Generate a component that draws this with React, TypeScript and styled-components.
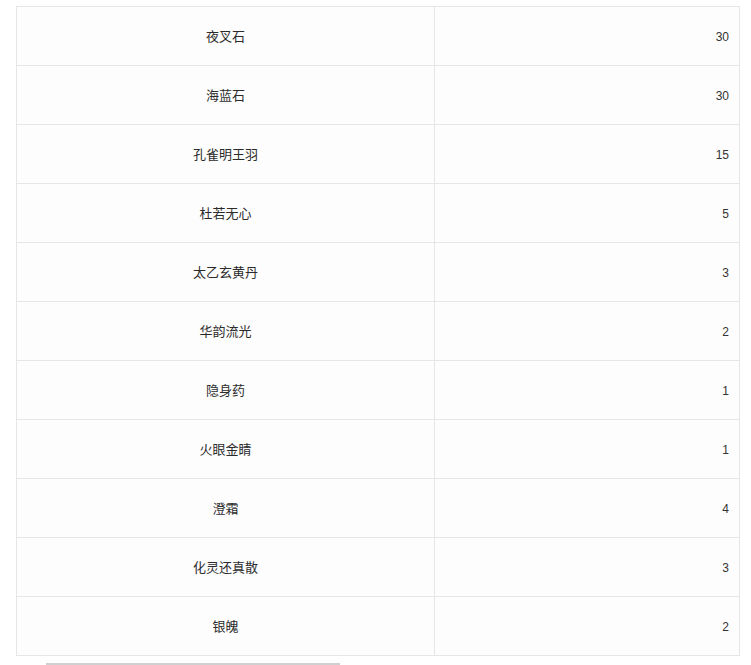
import React from 'react';
import styled, { createGlobalStyle } from 'styled-components';

const GlobalStyle = createGlobalStyle`
  html, body {
    margin: 0;
    padding: 0;
    background: #ffffff;
  }
`;

const Page = styled.div`
  padding: 6px 0 0 16px;
  font-family: 'Liberation Sans', 'Noto Sans CJK SC', sans-serif;
  font-size: 13px;
  color: #2b2b2b;
`;

const Table = styled.table`
  width: 724px;
  border-collapse: collapse;
  border: 1px solid #e6e6e6;
  background: #fdfdfd;
`;

const Cell = styled.td<{ $align: 'center' | 'right' }>`
  height: 56px;
  padding: 2px 10px 0;
  border: 1px solid #e6e6e6;
  text-align: ${({ $align }) => $align};
  vertical-align: middle;
  line-height: 16px;
`;

const NameCell = styled(Cell)`
  width: 397px;
`;

const Count = styled.span`
  font-size: 12px;
  color: #333333;
`;

const Rule = styled.div`
  width: 294px;
  height: 2px;
  margin: 7px 0 0 30px;
  background: #d0d0d0;
`;

const items: [string, number][] = [
  ['夜叉石', 30],
  ['海蓝石', 30],
  ['孔雀明王羽', 15],
  ['杜若无心', 5],
  ['太乙玄黄丹', 3],
  ['华韵流光', 2],
  ['隐身药', 1],
  ['火眼金睛', 1],
  ['澄霜', 4],
  ['化灵还真散', 3],
  ['银魄', 2],
];

export default function App() {
  return (
    <Page>
      <GlobalStyle />
      <Table>
        <tbody>
          {items.map(([name, count]) => (
            <tr key={name}>
              <NameCell $align="center">{name}</NameCell>
              <Cell $align="right">
                <Count>{count}</Count>
              </Cell>
            </tr>
          ))}
        </tbody>
      </Table>
      <Rule />
    </Page>
  );
}
